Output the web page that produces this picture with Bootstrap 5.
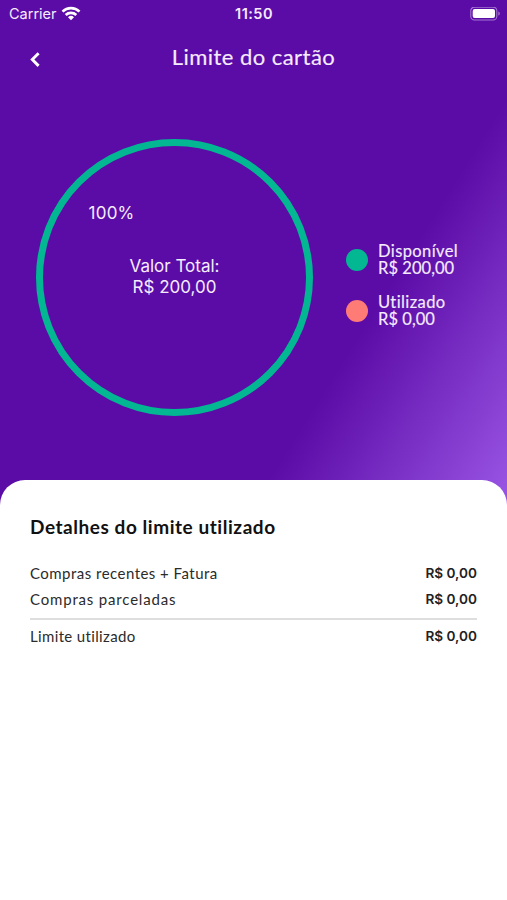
<!DOCTYPE html>
<html lang="pt-BR">
<head>
<meta charset="utf-8">
<meta name="viewport" content="width=device-width, initial-scale=1">
<title>Limite do cartão</title>
<link href="https://cdn.jsdelivr.net/npm/bootstrap@5.3.0/dist/css/bootstrap.min.css" rel="stylesheet">
<style>
body{font-family:Lato,"Open Sans",sans-serif;background:#fff;min-height:900px;overflow:hidden}
.limit-hero{height:506px;color:#f6ecff;background:linear-gradient(122deg,#5b0ba6 69%,#9752e2 98%)}
.status-strip{height:28px;padding:0 6px 0 9px;font-family:Inter,sans-serif;font-size:14.5px;line-height:28px}
.status-strip>div{flex:1 1 0}
.status-time{font-weight:600;letter-spacing:.45px;padding-right:2px}
.title-bar{height:60px;padding:0 28px}
.title-bar h1{font-size:22px;letter-spacing:.45px;line-height:26px;padding-bottom:2px;-webkit-text-stroke:.15px currentColor}
.side-slot{width:14px;height:20px}
.chart-row{padding:51px 0 0 36px}
.limit-ring{width:277px;height:277px;border:7px solid #02b792;font-family:Inter,sans-serif;font-size:17px;line-height:21px}
.ring-percent{padding:57px 0 0 45.5px;height:110px;letter-spacing:.25px}
.legend-dot{width:22px;height:22px}
.legend-list{margin-left:33px;padding-top:15px;gap:17px;font-size:16.5px;line-height:17px}
.legend-text{letter-spacing:.4px;margin-left:10px;-webkit-text-stroke:.15px currentColor}
.legend-text span{display:block;height:17px}
.legend-text span+span{letter-spacing:.05px}
.details-sheet{margin-top:-26px;height:420px;border-radius:25px 25px 0 0;padding:35px 30px 0;color:#2b2b2b;font-size:15px;line-height:26px}
.details-sheet h2{font-size:19px;line-height:24px;color:#111;margin-bottom:21px;letter-spacing:.55px}
.row-label{letter-spacing:.47px}
.row-label.wide-label{letter-spacing:.82px}
.row-label.tight-label{letter-spacing:.35px}
.row-value{font-family:Inter,sans-serif;font-weight:600;font-size:13.6px;color:#222}
.sheet-line{height:2px;background:#dedede;margin:6px 0 3px}
</style>
<script src="https://cdn.jsdelivr.net/npm/bootstrap@5.3.0/dist/js/bootstrap.bundle.min.js"></script>
</head>
<body>
<header class="limit-hero">
  <div class="status-strip d-flex align-items-center">
    <div class="d-flex align-items-center">
      <span>Carrier</span>
      <svg class="ms-1" width="20" height="16" viewBox="0 0 20 16" fill="none" stroke="#fff" stroke-width="2.7"><path d="M1.5 5.6a12.2 12.2 0 0 1 17 0M4.7 8.9a7.7 7.7 0 0 1 10.6 0"/><path d="M10 14.2 7 11.2a4.4 4.4 0 0 1 6 0z" fill="#fff" stroke="none"/></svg>
    </div>
    <div class="status-time text-center">11:50</div>
    <div class="d-flex justify-content-end">
      <svg width="31" height="14" viewBox="0 0 31 14"><rect x=".8" y=".2" width="26" height="12.8" rx="3.6" fill="none" stroke="#a477d0" stroke-width="1.1"/><rect x="2.7" y="2.1" width="22.3" height="9" rx="2" fill="#fff"/><path d="M28.3 4.5c2 .7 2 3.5 0 4.2z" fill="#a477d0"/></svg>
    </div>
  </div>
  <nav class="title-bar d-flex align-items-center justify-content-between">
    <svg class="side-slot" viewBox="0 0 14 20" fill="none" stroke="#fff" stroke-width="2.9"><path d="M10.6 5.2 4.3 11.6l6.3 6.3"/></svg>
    <h1 class="m-0 fw-normal">Limite do cartão</h1>
    <span class="side-slot"></span>
  </nav>
  <div class="chart-row d-flex align-items-center">
    <div class="limit-ring rounded-circle">
      <div class="ring-percent">100%</div>
      <div class="text-center">Valor Total:<br>R$ 200,00</div>
    </div>
    <div class="legend-list d-flex flex-column">
      <div class="d-flex align-items-center"><span class="legend-dot rounded-circle" style="background:#02b792"></span><span class="legend-text"><span>Disponível</span><span>R$ 200,00</span></span></div>
      <div class="d-flex align-items-center"><span class="legend-dot rounded-circle" style="background:#ff7b76"></span><span class="legend-text"><span>Utilizado</span><span>R$ 0,00</span></span></div>
    </div>
  </div>
</header>
<main class="details-sheet bg-white position-relative">
  <h2 class="fw-bold">Detalhes do limite utilizado</h2>
  <div class="d-flex justify-content-between"><span class="row-label">Compras recentes + Fatura</span><span class="row-value">R$ 0,00</span></div>
  <div class="d-flex justify-content-between"><span class="row-label wide-label">Compras parceladas</span><span class="row-value">R$ 0,00</span></div>
  <div class="sheet-line"></div>
  <div class="d-flex justify-content-between"><span class="row-label tight-label">Limite utilizado</span><span class="row-value">R$ 0,00</span></div>
</main>
</body>
</html>
